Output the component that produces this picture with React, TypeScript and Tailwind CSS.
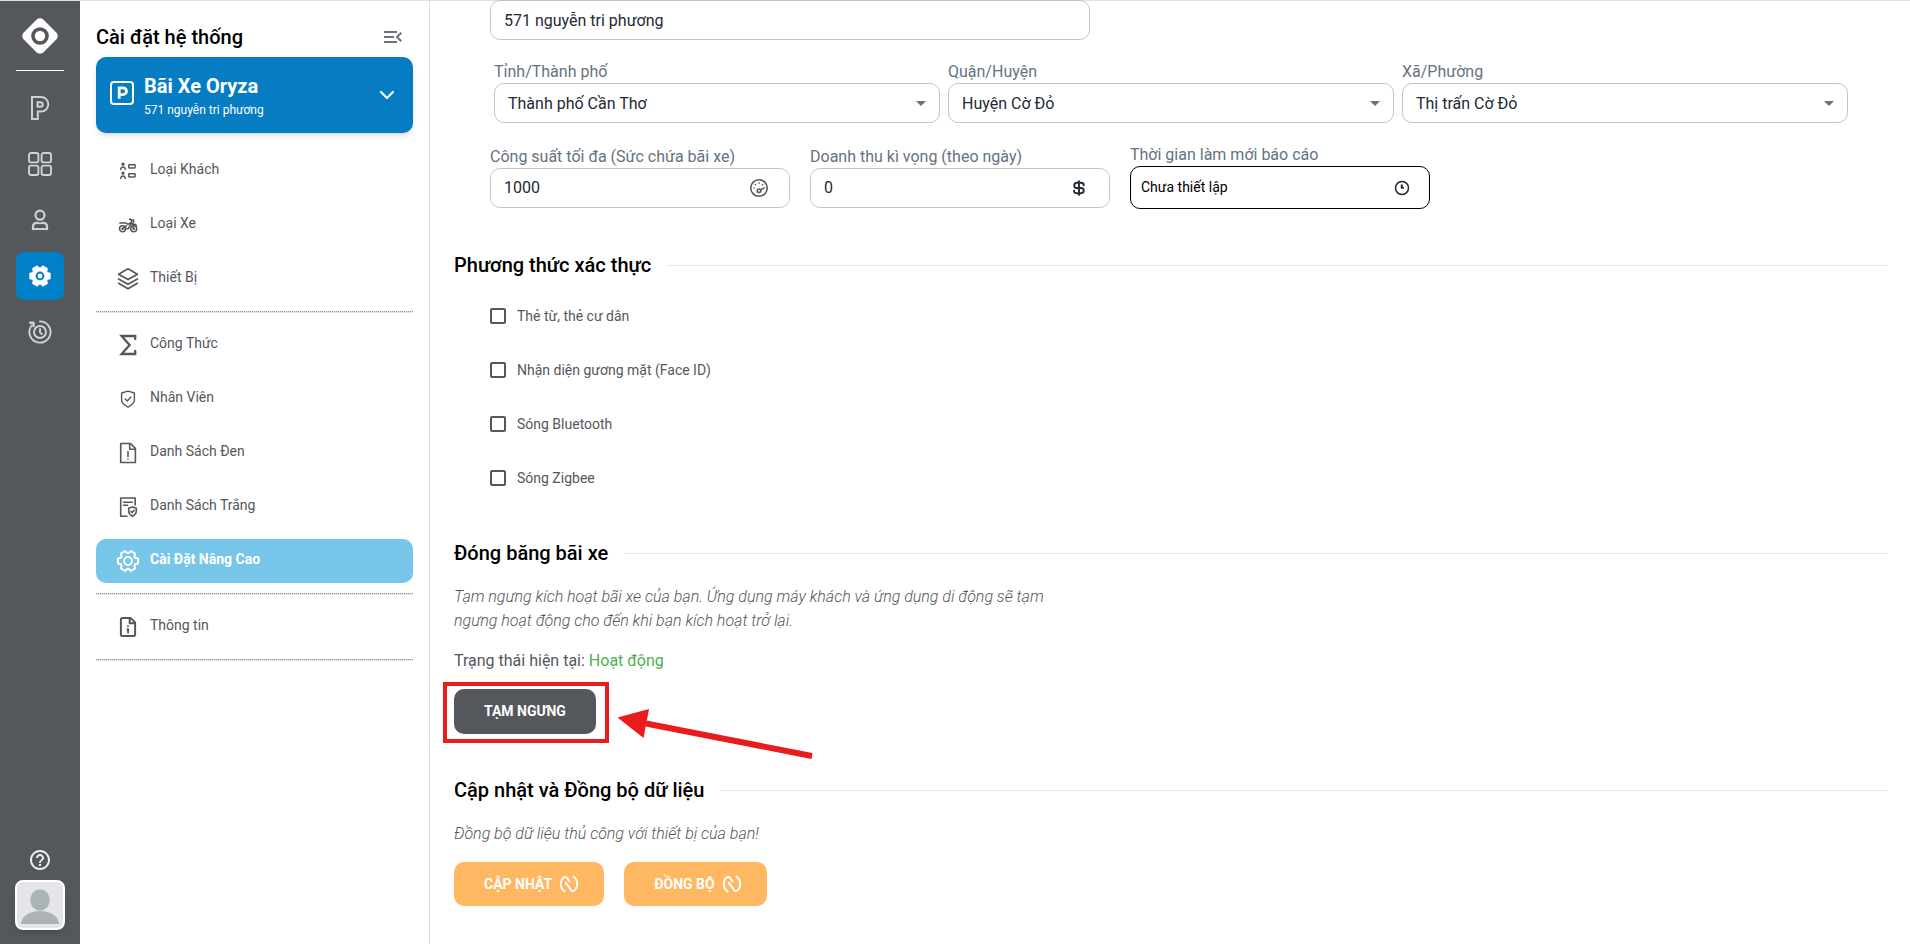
import { useId, useState, type ReactNode } from 'react'
import { MdHelpOutline, MdMenuOpen } from 'react-icons/md'

/* Outline of a six-toothed gear centred on 12,12. */
function gearPath(outer: number, inner: number) {
  const point = (radius: number, degrees: number) => {
    const a = (degrees * Math.PI) / 180
    return `${(12 + radius * Math.cos(a)).toFixed(2)} ${(12 + radius * Math.sin(a)).toFixed(2)}`
  }
  let d = ''
  for (let i = 0; i < 6; i++) {
    const t = i * 60
    d += `${i === 0 ? 'M' : 'L'}${point(inner, t - 21)}L${point(outer, t - 14)}L${point(outer, t + 14)}L${point(inner, t + 21)}Q${point(inner - 1.4, t + 30)} ${point(inner, t + 39)}`
  }
  return d + 'Z'
}

function Glyph({ size = 24, width = 1.5, children }: { size?: number; width?: number; children: ReactNode }) {
  return (
    <svg
      width={size}
      height={size}
      viewBox="0 0 24 24"
      fill="none"
      stroke="currentColor"
      strokeWidth={width}
      strokeLinecap="round"
      strokeLinejoin="round"
      aria-hidden="true"
      className="shrink-0"
    >
      {children}
    </svg>
  )
}

const Logo = () => (
  <svg width="36" height="36" viewBox="0 0 36 36" aria-hidden="true">
    <rect x="4" y="4" width="28" height="28" rx="5" fill="#fff" transform="rotate(45 18 18)" />
    <circle cx="18" cy="18" r="7" fill="none" stroke="#54575c" strokeWidth="3.6" />
  </svg>
)

const ParkingIcon = () => (
  <Glyph width={2}>
    <path d="M4 1h9a7.3 7.3 0 0 1 0 14.6H9.8V23H4Z" strokeLinejoin="miter" />
    <path d="M9.6 6.2h2.8a2.3 2.3 0 0 1 0 4.6H9.6Z" strokeLinejoin="miter" />
  </Glyph>
)

const GridIcon = () => (
  <Glyph width={1.9}>
    <rect x="1" y="1" width="9.4" height="9.4" rx="2" />
    <rect x="13.6" y="1" width="9.4" height="9.4" rx="2" />
    <rect x="1" y="13.6" width="9.4" height="9.4" rx="2" />
    <rect x="13.6" y="13.6" width="9.4" height="9.4" rx="2" />
  </Glyph>
)

const PersonIcon = () => (
  <Glyph width={2.2}>
    <circle cx="12" cy="7.2" r="4.5" />
    <path d="M5 21v-2.600c0-2.400 1.600-3.600 4-3.600 1.200 .5 4.800 .5 6 0 2.400 0 4 1.200 4 3.600V21Z" strokeLinejoin="miter" />
  </Glyph>
)

const GearSolidIcon = () => (
  <Glyph width={1.6}>
    <path d={gearPath(10.2, 8.4)} fill="currentColor" />
    <circle cx="12" cy="12" r="3.4" stroke="#0080c7" strokeWidth="2" />
  </Glyph>
)

const HistoryIcon = () => (
  <Glyph width={1.9}>
    <path d="M12 1.4A10.6 10.6 0 1 1 3.6 5.5" />
    <path d="M2.2 2.8h3.3v3.3" strokeWidth="2.4" />
    <circle cx="12" cy="12" r="6" />
    <path d="M12 9v3.4l1.8 1.6" />
  </Glyph>
)

const ParkingBoxIcon = () => (
  <Glyph width={2}>
    <rect x="1" y="1" width="22" height="22" rx="3" />
    <path d="M9.2 17.8V6.8h3.9a3.4 3.4 0 0 1 0 6.8H9.2" strokeWidth="2.8" strokeLinecap="butt" strokeLinejoin="miter" />
  </Glyph>
)

const ChevronIcon = () => (
  <Glyph width={2.2}>
    <path d="m6 9 6 6 6-6" />
  </Glyph>
)

const CustomersIcon = () => (
  <Glyph width={1.5}>
    <circle cx="7" cy="5.2" r="0.9" fill="currentColor" />
    <path d="M4.700 10.400c.3-1.600 1.100-2.300 2.300-2.300s2 .7 2.300 2.300" />
    <rect x="12.700" y="5.700" width="6.400" height="3.200" rx="0.600" />
    <circle cx="7" cy="14.200" r="0.900" fill="currentColor" />
    <path d="M4.700 19.400c.3-1.600 1.100-2.300 2.300-2.300s2 .7 2.300 2.300" />
    <rect x="12.700" y="14.700" width="6.400" height="3.200" rx="0.600" />
  </Glyph>
)

const MotorbikeIcon = () => (
  <Glyph width={1.5}>
    <circle cx="6.500" cy="15.800" r="3" />
    <circle cx="17.700" cy="15.800" r="3" />
    <circle cx="6.500" cy="15.800" r="0.500" />
    <circle cx="17.700" cy="15.800" r="0.500" />
    <path d="M3.800 10h6.200l2 1.400 3.600-2.300M6.500 15.800l3.900-3M10.500 15.800h1.700l3.200-6M17.700 15.800 14.800 6.300h-1.400M14.900 7h2.700v2.200M15.800 11.200c2.200-.5 3.800.1 4.800 1.500" />
  </Glyph>
)

const LayersIcon = () => (
  <Glyph width={1.7}>
    <path d="m12 1.800 9.400 5.400L12 12.600 2.600 7.200Z" />
    <path d="M2.600 11.900 12 17.300l9.400-5.400" />
    <path d="M2.600 16.300 12 21.700l9.400-5.400" />
  </Glyph>
)

const SigmaIcon = () => (
  <Glyph width={2.3}>
    <path d="M19.200 6V3H5.600l8 9-8 9h13.600V18" strokeLinejoin="miter" />
  </Glyph>
)

const ShieldIcon = () => (
  <Glyph width={1.4}>
    <path d="M12 4.100 18.400 6v7.300c0 3.100-2.800 4.800-6.400 7-3.600-2.200-6.400-3.900-6.400-7V6Z" />
    <path d="m9.200 11.900 2 2 3.700-4" />
  </Glyph>
)

const BlackListIcon = () => (
  <Glyph width={1.6}>
    <path d="M4.700 2.500h9.800l4.900 4.900v14.100H4.700Z" />
    <path d="M13.700 2.700v5.500h5.500" />
    <path d="M12 10.600v4.800M12 18v.1" />
  </Glyph>
)

const WhiteListIcon = () => (
  <Glyph width={1.6}>
    <path d="M11 21.300H4.700V3h14.500v7M7.500 7.200h8.800M7.500 10.300h4" />
    <path d="m16.500 12 3.800 1.300v3.200c0 2.200-1.500 3.400-3.800 4.700-2.300-1.300-3.800-2.500-3.800-4.700v-3.200Z" />
    <path d="m15 16.400 1.200 1.200 2-2.300" />
  </Glyph>
)

const GearIcon = () => (
  <Glyph width={2}>
    <path d={gearPath(10.4, 8.5)} />
    <circle cx="12" cy="12" r="3.9" />
  </Glyph>
)

const InfoFileIcon = () => (
  <Glyph width={2}>
    <path d="M6.500 2.900h8l4.600 4.600v12.200c0 .9-.5 1.400-1.400 1.400H6.300c-.9 0-1.400-.5-1.400-1.400V4.500c0-1 .6-1.600 1.600-1.600Z" />
    <path d="M13.700 3.200v5.100h5.200" />
    <path d="M12 11.200v.1M11.500 14.200h.6v3.200" />
  </Glyph>
)

const GaugeIcon = () => (
  <Glyph size={22} width={1.7}>
    <g stroke="#54575c">
      <circle cx="12" cy="12" r="9" />
      <circle cx="12" cy="15" r="1.900" />
      <path d="m13.700 14.100 4-2.300M6.600 12v.1M8.100 8.300v.1M12 6.600v.1M15.900 8.300v.1" />
    </g>
  </Glyph>
)

const DollarIcon = () => (
  <Glyph size={22} width={2.1}>
    <path d="M12 4.500v15M17.200 9c0-1.800-1.200-2.700-2.900-2.700H9.700a2.850 2.850 0 0 0 0 5.700h4.600a2.850 2.850 0 0 1 0 5.700H9.400c-1.700 0-2.900-.9-2.900-2.700" />
  </Glyph>
)

const ClockIcon = () => (
  <Glyph size={20} width={1.8}>
    <circle cx="12" cy="12" r="7.800" />
    <path d="M11.700 8.700v3h1.600" strokeWidth="2.400" />
  </Glyph>
)

const SyncIcon = () => (
  <Glyph size={20} width={2.4}>
    <path d="M6.800 21C.8 17.200.6 7.400 6.400 3.600c1.200-.7 2-.2 2.800.8l3.400 4.400" />
    <path d="M17.200 3c6 3.800 6.200 13.600.4 17.400-1.200.7-2 .2-2.800-.8L8.200 10.600" />
  </Glyph>
)

const railItems = [
  { label: 'Bãi xe', icon: <ParkingIcon /> },
  { label: 'Tổng quan', icon: <GridIcon /> },
  { label: 'Khách hàng', icon: <PersonIcon /> },
  { label: 'Cài đặt', icon: <GearSolidIcon />, active: true },
  { label: 'Lịch sử', icon: <HistoryIcon /> },
]

const menuGroups = [
  [
    { label: 'Loại Khách', icon: <CustomersIcon /> },
    { label: 'Loại Xe', icon: <MotorbikeIcon /> },
    { label: 'Thiết Bị', icon: <LayersIcon /> },
  ],
  [
    { label: 'Công Thức', icon: <SigmaIcon /> },
    { label: 'Nhân Viên', icon: <ShieldIcon /> },
    { label: 'Danh Sách Đen', icon: <BlackListIcon /> },
    { label: 'Danh Sách Trắng', icon: <WhiteListIcon /> },
    { label: 'Cài Đặt Nâng Cao', icon: <GearIcon />, active: true },
  ],
  [{ label: 'Thông tin', icon: <InfoFileIcon /> }],
]

const authMethods = ['Thẻ từ, thẻ cư dân', 'Nhận diện gương mặt (Face ID)', 'Sóng Bluetooth', 'Sóng Zigbee']

function Rail() {
  return (
    <nav aria-label="Chính" className="flex w-20 shrink-0 flex-col items-center bg-[#54575c] pb-[14px] pt-[17px] text-[#d0d1d2]">
      <a href="#home" aria-label="Trang chủ">
        <Logo />
      </a>
      <div className="mt-4 h-px w-12 bg-white" />
      <ul className="mt-[13px] flex flex-col gap-2">
        {railItems.map((item) => (
          <li key={item.label}>
            <a
              href="#rail"
              aria-label={item.label}
              className={`flex size-12 items-center justify-center rounded-lg ${item.active ? 'bg-[#0080c7] text-white' : ''}`}
            >
              {item.icon}
            </a>
          </li>
        ))}
      </ul>
      <button type="button" aria-label="Trợ giúp" className="mt-auto mb-2 text-[#eeeeee]">
        <MdHelpOutline size={24} />
      </button>
      <button
        type="button"
        aria-label="Tài khoản"
        className="size-[50px] overflow-hidden rounded-lg border-2 border-white bg-[#e3e5e8] shadow-md"
      >
        <svg width="46" height="46" viewBox="0 0 46 46" fill="#abb3b5" aria-hidden="true">
          <ellipse cx="23" cy="18" rx="9.8" ry="10.5" />
          <path d="M3.800 42C5 34 12.500 29 23 29s18 5 19.200 13Z" />
        </svg>
      </button>
    </nav>
  )
}

function Divider() {
  return <hr className="h-[2px] border-0 border-t border-dotted border-[#8794a1] bg-[#e4e6e8]" />
}

function SidePanel() {
  return (
    <aside className="flex w-[350px] shrink-0 flex-col border-r border-[#dcdee0] px-4">
      <div className="flex h-14 items-center justify-between pr-2 pt-4">
        <h1 className="text-xl font-medium text-black">Cài đặt hệ thống</h1>
        <button type="button" aria-label="Thu gọn menu" className="text-[#637381]">
          <MdMenuOpen size={24} />
        </button>
      </div>
      <button
        type="button"
        className="flex h-[76px] items-center rounded-[10px] bg-[#067cc2] px-[14px] text-left text-white shadow-md"
      >
        <span className="pb-1">
          <ParkingBoxIcon />
        </span>
        <span className="flex grow flex-col pl-[10px] pt-[2px]">
          <span className="text-xl leading-7 font-bold">Bãi Xe Oryza</span>
          <span className="text-xs leading-5">571 nguyễn tri phương</span>
        </span>
        <ChevronIcon />
      </button>
      <nav aria-label="Cài đặt hệ thống" className="mt-4 flex flex-col gap-[10px]">
        {menuGroups.map((group, i) => (
          <div key={i} className="flex flex-col gap-[10px]">
            {group.map((item) => (
              <a
                key={item.label}
                href="#menu"
                className={`flex h-11 items-center gap-[10px] rounded-[10px] pl-5 text-sm ${
                  item.active ? 'bg-[#77c5e8] font-bold text-white' : 'text-[#54575c]'
                }`}
              >
                {item.icon}
                <span className="pb-1">{item.label}</span>
              </a>
            ))}
            <Divider />
          </div>
        ))}
      </nav>
    </aside>
  )
}

function SectionTitle({ children }: { children: ReactNode }) {
  return (
    <div className="flex items-center gap-4">
      <h2 className="text-xl leading-6 font-medium text-black">{children}</h2>
      <div className="h-px grow bg-[#e3e5e7]" />
    </div>
  )
}

function SelectField({ label, value }: { label: string; value: string }) {
  const id = useId()
  return (
    <div className="flex flex-col">
      <label htmlFor={id} className="leading-[22px] text-[#637381]">
        {label}
      </label>
      <div className="relative">
        <select
          id={id}
          defaultValue={value}
          className="block h-10 w-full appearance-none rounded-[10px] border border-[#c4c4c4] bg-white px-[13px] pt-[2px] text-[#212b36]"
        >
          <option>{value}</option>
        </select>
        <svg width="10" height="5" viewBox="0 0 10 5" fill="#637381" aria-hidden="true" className="pointer-events-none absolute right-[14px] top-[18px]">
          <path d="M0 0h10L5 5Z" />
        </svg>
      </div>
    </div>
  )
}

function IconField({ label, value, icon, strong = false }: { label: string; value: string; icon: ReactNode; strong?: boolean }) {
  const id = useId()
  return (
    <div className={`flex w-[300px] flex-col ${strong ? '' : 'mb-px'}`}>
      <label htmlFor={id} className="leading-[22px] text-[#637381]">
        {label}
      </label>
      <div
        className={`flex items-center rounded-[10px] border text-[#212b36] ${
          strong ? 'h-[43px] border-black pl-[10px] pr-[17px] text-sm' : 'h-10 border-[#c4c4c4] pl-[13px] pr-[19px]'
        }`}
      >
        <input
          id={id}
          defaultValue={value}
          className={`min-w-0 grow bg-transparent outline-none ${strong ? 'pb-[2px] text-black' : ''}`}
        />
        {icon}
      </div>
    </div>
  )
}

function SyncButton({ children }: { children: ReactNode }) {
  return (
    <button
      type="button"
      className="flex h-11 items-center gap-[7px] rounded-[10px] bg-[#ffb762] pl-[30px] pr-[25px] text-sm font-bold text-white"
    >
      <span className="pb-px">{children}</span>
      <SyncIcon />
    </button>
  )
}

/* Red frame and arrow that point out the suspend button. */
function Callout() {
  return (
    <>
      <div className="pointer-events-none absolute -bottom-[9px] -left-[11px] -right-[13px] -top-[7px] border-4 border-[#e81c1c]" />
      <svg width="198" height="54" viewBox="0 0 198 54" fill="#e81c1c" aria-hidden="true" className="pointer-events-none absolute left-[162px] top-[18px]">
        <path d="M1.500 10.500 33 2l-5.500 29Z" />
        <path d="m30 16.500 166 32.500" stroke="#e81c1c" strokeWidth="6" />
      </svg>
    </>
  )
}

export default function App() {
  const [checked, setChecked] = useState<string[]>([])
  const toggle = (name: string) =>
    setChecked((prev) => (prev.includes(name) ? prev.filter((n) => n !== name) : [...prev, name]))

  return (
    <div className="flex min-h-screen border-t border-[#e0e0e0] bg-white font-['Roboto','Liberation_Sans',sans-serif] text-base">
      <Rail />
      <SidePanel />
      <main className="min-w-0 grow pb-9 pl-6 pr-[22px]">
        <div className="-mt-px px-9">
          <input
            aria-label="Địa chỉ"
            defaultValue="571 nguyễn tri phương"
            className="block h-10 w-full max-w-[600px] rounded-[10px] border border-[#c4c4c4] px-[13px] pt-px text-[#212b36]"
          />
          <div className="mt-[21px] grid grid-cols-3 gap-2 px-1">
            <SelectField label="Tỉnh/Thành phố" value="Thành phố Cần Thơ" />
            <SelectField label="Quận/Huyện" value="Huyện Cờ Đỏ" />
            <SelectField label="Xã/Phường" value="Thị trấn Cờ Đỏ" />
          </div>
          <div className="mt-[21px] flex flex-wrap items-end gap-5">
            <IconField label="Công suất tối đa (Sức chứa bãi xe)" value="1000" icon={<GaugeIcon />} />
            <IconField label="Doanh thu kì vọng (theo ngày)" value="0" icon={<DollarIcon />} />
            <IconField label="Thời gian làm mới báo cáo" value="Chưa thiết lập" icon={<ClockIcon />} strong />
          </div>
        </div>

        <section className="mt-11">
          <SectionTitle>Phương thức xác thực</SectionTitle>
          <div className="mt-[29px] flex flex-col items-start gap-[34px] px-9">
            {authMethods.map((name) => (
              <label key={name} className="flex h-5 items-center gap-[11px] text-sm text-[#54575c]">
                <input
                  type="checkbox"
                  checked={checked.includes(name)}
                  onChange={() => toggle(name)}
                  className="size-4 appearance-none rounded-[2px] border-2 border-[#54575c] checked:bg-[#067cc2]"
                />
                {name}
              </label>
            ))}
          </div>
        </section>

        <section className="mt-[53px]">
          <SectionTitle>Đóng băng bãi xe</SectionTitle>
          <p className="mt-5 max-w-[600px] leading-6 font-light text-[#54575c] italic">
            Tạm ngưng kích hoạt bãi xe của bạn. Ứng dụng máy khách và ứng dụng di động sẽ tạm ngưng hoạt động cho đến khi bạn kích hoạt trở lại.
          </p>
          <p className="mt-4 leading-6 text-[#54575c]">
            Trạng thái hiện tại: <span className="text-[#4caf50]">Hoạt động</span>
          </p>
          <div className="relative mt-4 w-fit">
            <button type="button" className="block h-[45px] rounded-[10px] bg-[#54575c] px-[30px] pb-[2px] text-sm font-bold text-white">
              TẠM NGƯNG
            </button>
            <Callout />
          </div>
        </section>

        <section className="mt-11">
          <SectionTitle>Cập nhật và Đồng bộ dữ liệu</SectionTitle>
          <p className="mt-5 leading-6 font-light text-[#54575c] italic">Đồng bộ dữ liệu thủ công với thiết bị của bạn!</p>
          <div className="mt-4 flex gap-5">
            <SyncButton>CẬP NHẬT</SyncButton>
            <SyncButton>ĐỒNG BỘ</SyncButton>
          </div>
        </section>
      </main>
    </div>
  )
}
